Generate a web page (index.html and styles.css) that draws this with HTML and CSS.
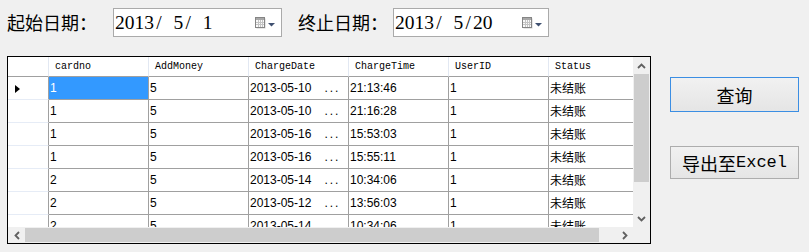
FILE: index.html
```html
<!DOCTYPE html>
<html>
<head>
<meta charset="utf-8">
<link rel="stylesheet" href="styles.css">
</head>
<body>
<div class="top">
  <div class="lbl lbl1">起始日期：</div>
  <div class="dp dp1">
    <span class="dtext">2013<span class="c">/</span><span class="c"> </span>5<span class="c">/</span><span class="c"> </span>1</span>
    <svg class="cal" width="21" height="12" viewBox="0 0 21 12"><rect x="1.5" y="1.5" width="9" height="10" fill="#cfcfcf"/><rect x="0.5" y="0.5" width="9" height="10" fill="#fafafa" stroke="#858585"/><rect x="1" y="1" width="8" height="2" fill="#a8a8a8"/><path d="M1 5.5h8M1 7.5h8M3.5 3v7M5.5 3v7M7.5 3v7" stroke="#c4c4c4"/><path d="M13 6h7l-3.5 3.5z" fill="#3f5070"/></svg>
  </div>
  <div class="lbl lbl2">终止日期：</div>
  <div class="dp dp2">
    <span class="dtext">2013<span class="c">/</span><span class="c"> </span>5<span class="c">/</span>20</span>
    <svg class="cal" width="21" height="12" viewBox="0 0 21 12"><rect x="1.5" y="1.5" width="9" height="10" fill="#cfcfcf"/><rect x="0.5" y="0.5" width="9" height="10" fill="#fafafa" stroke="#858585"/><rect x="1" y="1" width="8" height="2" fill="#a8a8a8"/><path d="M1 5.5h8M1 7.5h8M3.5 3v7M5.5 3v7M7.5 3v7" stroke="#c4c4c4"/><path d="M13 6h7l-3.5 3.5z" fill="#3f5070"/></svg>
  </div>
</div>
<div class="main">
  <div class="grid">
    <div class="viewport">
      <div class="row hdr">
        <div class="rh"></div>
        <div class="hc">cardno</div>
        <div class="hc">AddMoney</div>
        <div class="hc">ChargeDate</div>
        <div class="hc">ChargeTime</div>
        <div class="hc">UserID</div>
        <div class="hc">Status</div>
      </div>
      <div class="row">
        <div class="rh"><span class="tri"></span></div>
        <div class="cell sel">1</div><div class="cell">5</div>
        <div class="cell">2013-05-10<span class="el">...</span></div>
        <div class="cell">21:13:46</div><div class="cell">1</div><div class="cell cjk">未结账</div>
      </div>
      <div class="row">
        <div class="rh"></div>
        <div class="cell">1</div><div class="cell">5</div>
        <div class="cell">2013-05-10<span class="el">...</span></div>
        <div class="cell">21:16:28</div><div class="cell">1</div><div class="cell cjk">未结账</div>
      </div>
      <div class="row">
        <div class="rh"></div>
        <div class="cell">1</div><div class="cell">5</div>
        <div class="cell">2013-05-16<span class="el">...</span></div>
        <div class="cell">15:53:03</div><div class="cell">1</div><div class="cell cjk">未结账</div>
      </div>
      <div class="row">
        <div class="rh"></div>
        <div class="cell">1</div><div class="cell">5</div>
        <div class="cell">2013-05-16<span class="el">...</span></div>
        <div class="cell">15:55:11</div><div class="cell">1</div><div class="cell cjk">未结账</div>
      </div>
      <div class="row">
        <div class="rh"></div>
        <div class="cell">2</div><div class="cell">5</div>
        <div class="cell">2013-05-14<span class="el">...</span></div>
        <div class="cell">10:34:06</div><div class="cell">1</div><div class="cell cjk">未结账</div>
      </div>
      <div class="row">
        <div class="rh"></div>
        <div class="cell">2</div><div class="cell">5</div>
        <div class="cell">2013-05-12<span class="el">...</span></div>
        <div class="cell">13:56:03</div><div class="cell">1</div><div class="cell cjk">未结账</div>
      </div>
      <div class="row">
        <div class="rh"></div>
        <div class="cell">2</div><div class="cell">5</div>
        <div class="cell">2013-05-14<span class="el">...</span></div>
        <div class="cell">10:34:06</div><div class="cell">1</div><div class="cell cjk">未结账</div>
      </div>
    </div>
    <div class="vscroll">
      <div class="sbtn"><svg width="9" height="6" viewBox="0 0 9 6"><path d="M1 5l3.5-3.5L8 5" fill="none" stroke="#606060" stroke-width="1.8"/></svg></div>
      <div class="vthumb"></div>
      <div class="fill"></div>
      <div class="sbtn"><svg width="9" height="6" viewBox="0 0 9 6"><path d="M1 1l3.5 3.5L8 1" fill="none" stroke="#606060" stroke-width="1.8"/></svg></div>
    </div>
    <div class="hscroll">
      <div class="sbtn"><svg width="6" height="9" viewBox="0 0 6 9"><path d="M5 1L1.5 4.5 5 8" fill="none" stroke="#606060" stroke-width="1.8"/></svg></div>
      <div class="hthumb"></div>
      <div class="fill"></div>
      <div class="sbtn"><svg width="6" height="9" viewBox="0 0 6 9"><path d="M1 1l3.5 3.5L1 8" fill="none" stroke="#606060" stroke-width="1.8"/></svg></div>
    </div>
    <div class="corner"></div>
  </div>
  <div class="buttons">
    <div class="btn btn-focus">查询</div>
    <div class="btn btn2">导出至<span class="latin">Excel</span></div>
  </div>
</div>
</body>
</html>
```
FILE: styles.css
```css
html, body {
  margin: 0;
  padding: 0;
  background: #f0f0f0;
}
body {
  width: 809px;
  height: 252px;
  overflow: hidden;
  font-family: "Liberation Sans", "Noto Sans CJK SC", sans-serif;
  color: #000;
}
.top {
  display: flex;
  align-items: center;
  height: 29px;
  margin-top: 8px;
  padding-left: 7px;
}
.lbl {
  font-family: "Noto Sans CJK SC", sans-serif;
  font-size: 18px;
  line-height: 29px;
  white-space: nowrap;
}
.lbl1 { width: 106px; }
.lbl2 { width: 95px; margin-left: 16px; }
.dp {
  box-sizing: border-box;
  height: 29px;
  background: #fff;
  border: 1px solid #aaaaaa;
  display: flex;
  align-items: center;
  padding-left: 1px;
}
.dp1 { width: 169px; }
.dp2 { width: 156px; }
.dtext {
  font-family: "Liberation Serif", serif;
  font-size: 19.5px;
  line-height: 27px;
  white-space: pre;
}
.dtext .c {
  display: inline-block;
  width: 9.75px;
  text-align: center;
}
.cal {
  margin-left: auto;
  margin-right: 5px;
  margin-top: 1px;
}
.main {
  display: flex;
  margin-top: 19px;
  padding-left: 7px;
}
.grid {
  display: grid;
  grid-template-columns: 625px 17px;
  grid-template-rows: 170px 16px;
  border: 1px solid #000;
  background: #fff;
}
.viewport {
  overflow: hidden;
  background: #fff;
}
.row {
  display: flex;
  box-sizing: border-box;
  height: 23px;
  width: 641px;
}
.row.hdr { height: 20px; }
.rh {
  box-sizing: border-box;
  width: 41px;
  flex: none;
  border-right: 1px solid #a0a0a0;
  border-bottom: 1px solid #e6ecf6;
  display: flex;
  align-items: center;
  padding-left: 7px;
}
.hdr .rh {
  border-right: 1px solid #e2e8f2;
  border-bottom: 1px solid #a0a0a0;
}
.hc {
  box-sizing: border-box;
  width: 100px;
  flex: none;
  border-right: 1px solid #e2e8f2;
  border-bottom: 1px solid #a0a0a0;
  padding-left: 6px;
  font-family: "Liberation Mono", monospace;
  font-size: 10px;
  line-height: 19px;
  white-space: nowrap;
}
.cell {
  box-sizing: border-box;
  width: 100px;
  flex: none;
  border-right: 1px solid #a0a0a0;
  border-bottom: 1px solid #a0a0a0;
  padding-left: 1px;
  font-size: 12px;
  line-height: 22px;
  white-space: nowrap;
  overflow: hidden;
}
.cell.sel {
  background: #3399ff;
  color: #fff;
}
.cell.cjk {
  font-family: "Noto Sans CJK SC", sans-serif;
}
.el {
  margin-left: 13px;
  letter-spacing: 2px;
}
.tri {
  width: 0;
  height: 0;
  border-left: 5px solid #000;
  border-top: 4px solid transparent;
  border-bottom: 4px solid transparent;
  margin-top: 2px;
}
.vscroll {
  display: flex;
  flex-direction: column;
  background: #f0f0f0;
}
.hscroll {
  display: flex;
  background: #f0f0f0;
}
.sbtn {
  flex: none;
  width: 17px;
  height: 17px;
  display: flex;
  align-items: center;
  justify-content: center;
}
.hscroll .sbtn { height: 16px; }
.vthumb {
  flex: none;
  height: 108px;
  margin: 0 1px;
  background: #cdcdcd;
}
.hthumb {
  flex: none;
  width: 574px;
  margin: 1px 0;
  background: #cdcdcd;
}
.fill { flex: 1; }
.corner { background: #f0f0f0; }
.buttons {
  display: flex;
  flex-direction: column;
  margin-left: 19px;
  padding-top: 21px;
}
.btn {
  box-sizing: border-box;
  width: 129px;
  height: 35px;
  border: 1px solid #adadad;
  background: linear-gradient(#f1f1f1, #e5e5e5);
  display: flex;
  align-items: center;
  justify-content: center;
  font-family: "Noto Sans CJK SC", sans-serif;
  font-size: 18px;
}
.btn-focus { border-color: #3b8ee3; }
.btn2 {
  height: 33px;
  margin-top: 34px;
}
.latin {
  font-family: "Liberation Mono", monospace;
  font-size: 17px;
}
```
